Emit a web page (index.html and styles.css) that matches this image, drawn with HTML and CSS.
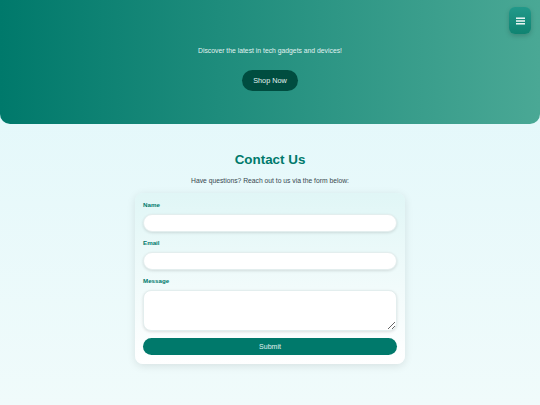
FILE: index.html
```html
<!DOCTYPE html>
<html lang="en">
<head>
<meta charset="utf-8">
<title>Contact</title>
<link rel="stylesheet" href="styles.css">
</head>
<body>
<header class="hero">
  <button class="menu-btn" aria-label="Menu">
    <svg width="9" height="8" viewBox="0 0 9 8"><rect x="0" y="0.5" width="9" height="1.4" fill="#fff"/><rect x="0" y="3.3" width="9" height="1.4" fill="#fff"/><rect x="0" y="6.1" width="9" height="1.4" fill="#fff"/></svg>
  </button>
  <p class="hero-text">Discover the latest in tech gadgets and devices!</p>
  <a class="shop-btn" href="#">Shop Now</a>
</header>
<main class="contact">
  <h2 class="contact-title">Contact Us</h2>
  <p class="contact-sub">Have questions? Reach out to us via the form below:</p>
  <form class="card">
    <label class="field-label">Name</label>
    <input class="field-input" type="text">
    <label class="field-label">Email</label>
    <input class="field-input" type="email">
    <label class="field-label">Message</label>
    <textarea class="field-area"></textarea>
    <button class="submit-btn" type="button">Submit</button>
  </form>
</main>
</body>
</html>
```
FILE: styles.css
```css
* { box-sizing: border-box; }
html, body { margin: 0; padding: 0; }
body {
  font-family: "Liberation Sans", Arial, sans-serif;
  background: linear-gradient(to bottom, #e0f7fa, #f0fbfb);
  min-height: 405px;
}
.hero {
  position: relative;
  height: 124px;
  background: linear-gradient(to right, #00796b, #4aa895);
  border-radius: 0 0 10px 10px;
  display: flex;
  flex-direction: column;
  align-items: center;
  padding-top: 46px;
}
.menu-btn {
  position: absolute;
  top: 7px;
  right: 9px;
  width: 22px;
  height: 27px;
  border: none;
  border-radius: 6px;
  background: linear-gradient(to bottom, #22998a, #0f8371);
  box-shadow: 0 2px 5px rgba(0,0,0,0.18);
  display: flex;
  align-items: center;
  justify-content: center;
  padding: 0;
}
.hero-text {
  margin: 0;
  color: #e0f2f1;
  font-size: 6.8px;
  line-height: 9px;
}
.shop-btn {
  margin-top: 15px;
  display: inline-flex;
  align-items: center;
  justify-content: center;
  width: 56px;
  height: 21px;
  border-radius: 11px;
  background: #004d40;
  color: #e0f2f1;
  font-size: 7.3px;
  text-decoration: none;
}
.contact {
  display: flex;
  flex-direction: column;
  align-items: center;
  padding-top: 27px;
}
.contact-title {
  margin: 0;
  font-size: 13.4px;
  line-height: 18px;
  color: #00796b;
  font-weight: bold;
}
.contact-sub {
  margin: 7px 0 0;
  font-size: 6.75px;
  line-height: 10px;
  color: #37474f;
}
.card {
  margin-top: 7px;
  width: 270px;
  padding: 7px 8px 9px;
  border-radius: 8px;
  background: linear-gradient(to bottom, #e0f6f6, #ffffff);
  box-shadow: 0 2px 8px rgba(0,0,0,0.10);
  display: flex;
  flex-direction: column;
}
.field-label {
  font-size: 6.2px;
  line-height: 9px;
  font-weight: bold;
  color: #00796b;
  margin-bottom: 5px;
}
.field-input {
  height: 18px;
  border: 1px solid #e3eeee;
  border-radius: 9px;
  background: #fff;
  box-shadow: 0 1px 3px rgba(0,0,0,0.12);
  margin-bottom: 6px;
  outline: none;
}
.field-area {
  height: 41px;
  border: 1px solid #e3eeee;
  border-radius: 8px;
  background: #fff;
  box-shadow: 0 1px 3px rgba(0,0,0,0.12);
  margin: 0 0 7px;
  resize: vertical;
  outline: none;
}
.submit-btn {
  height: 17px;
  border: none;
  border-radius: 9px;
  background: #00796b;
  color: #e0f2f1;
  font-family: "Liberation Sans", Arial, sans-serif;
  font-size: 7px;
  padding: 0;
}
```
